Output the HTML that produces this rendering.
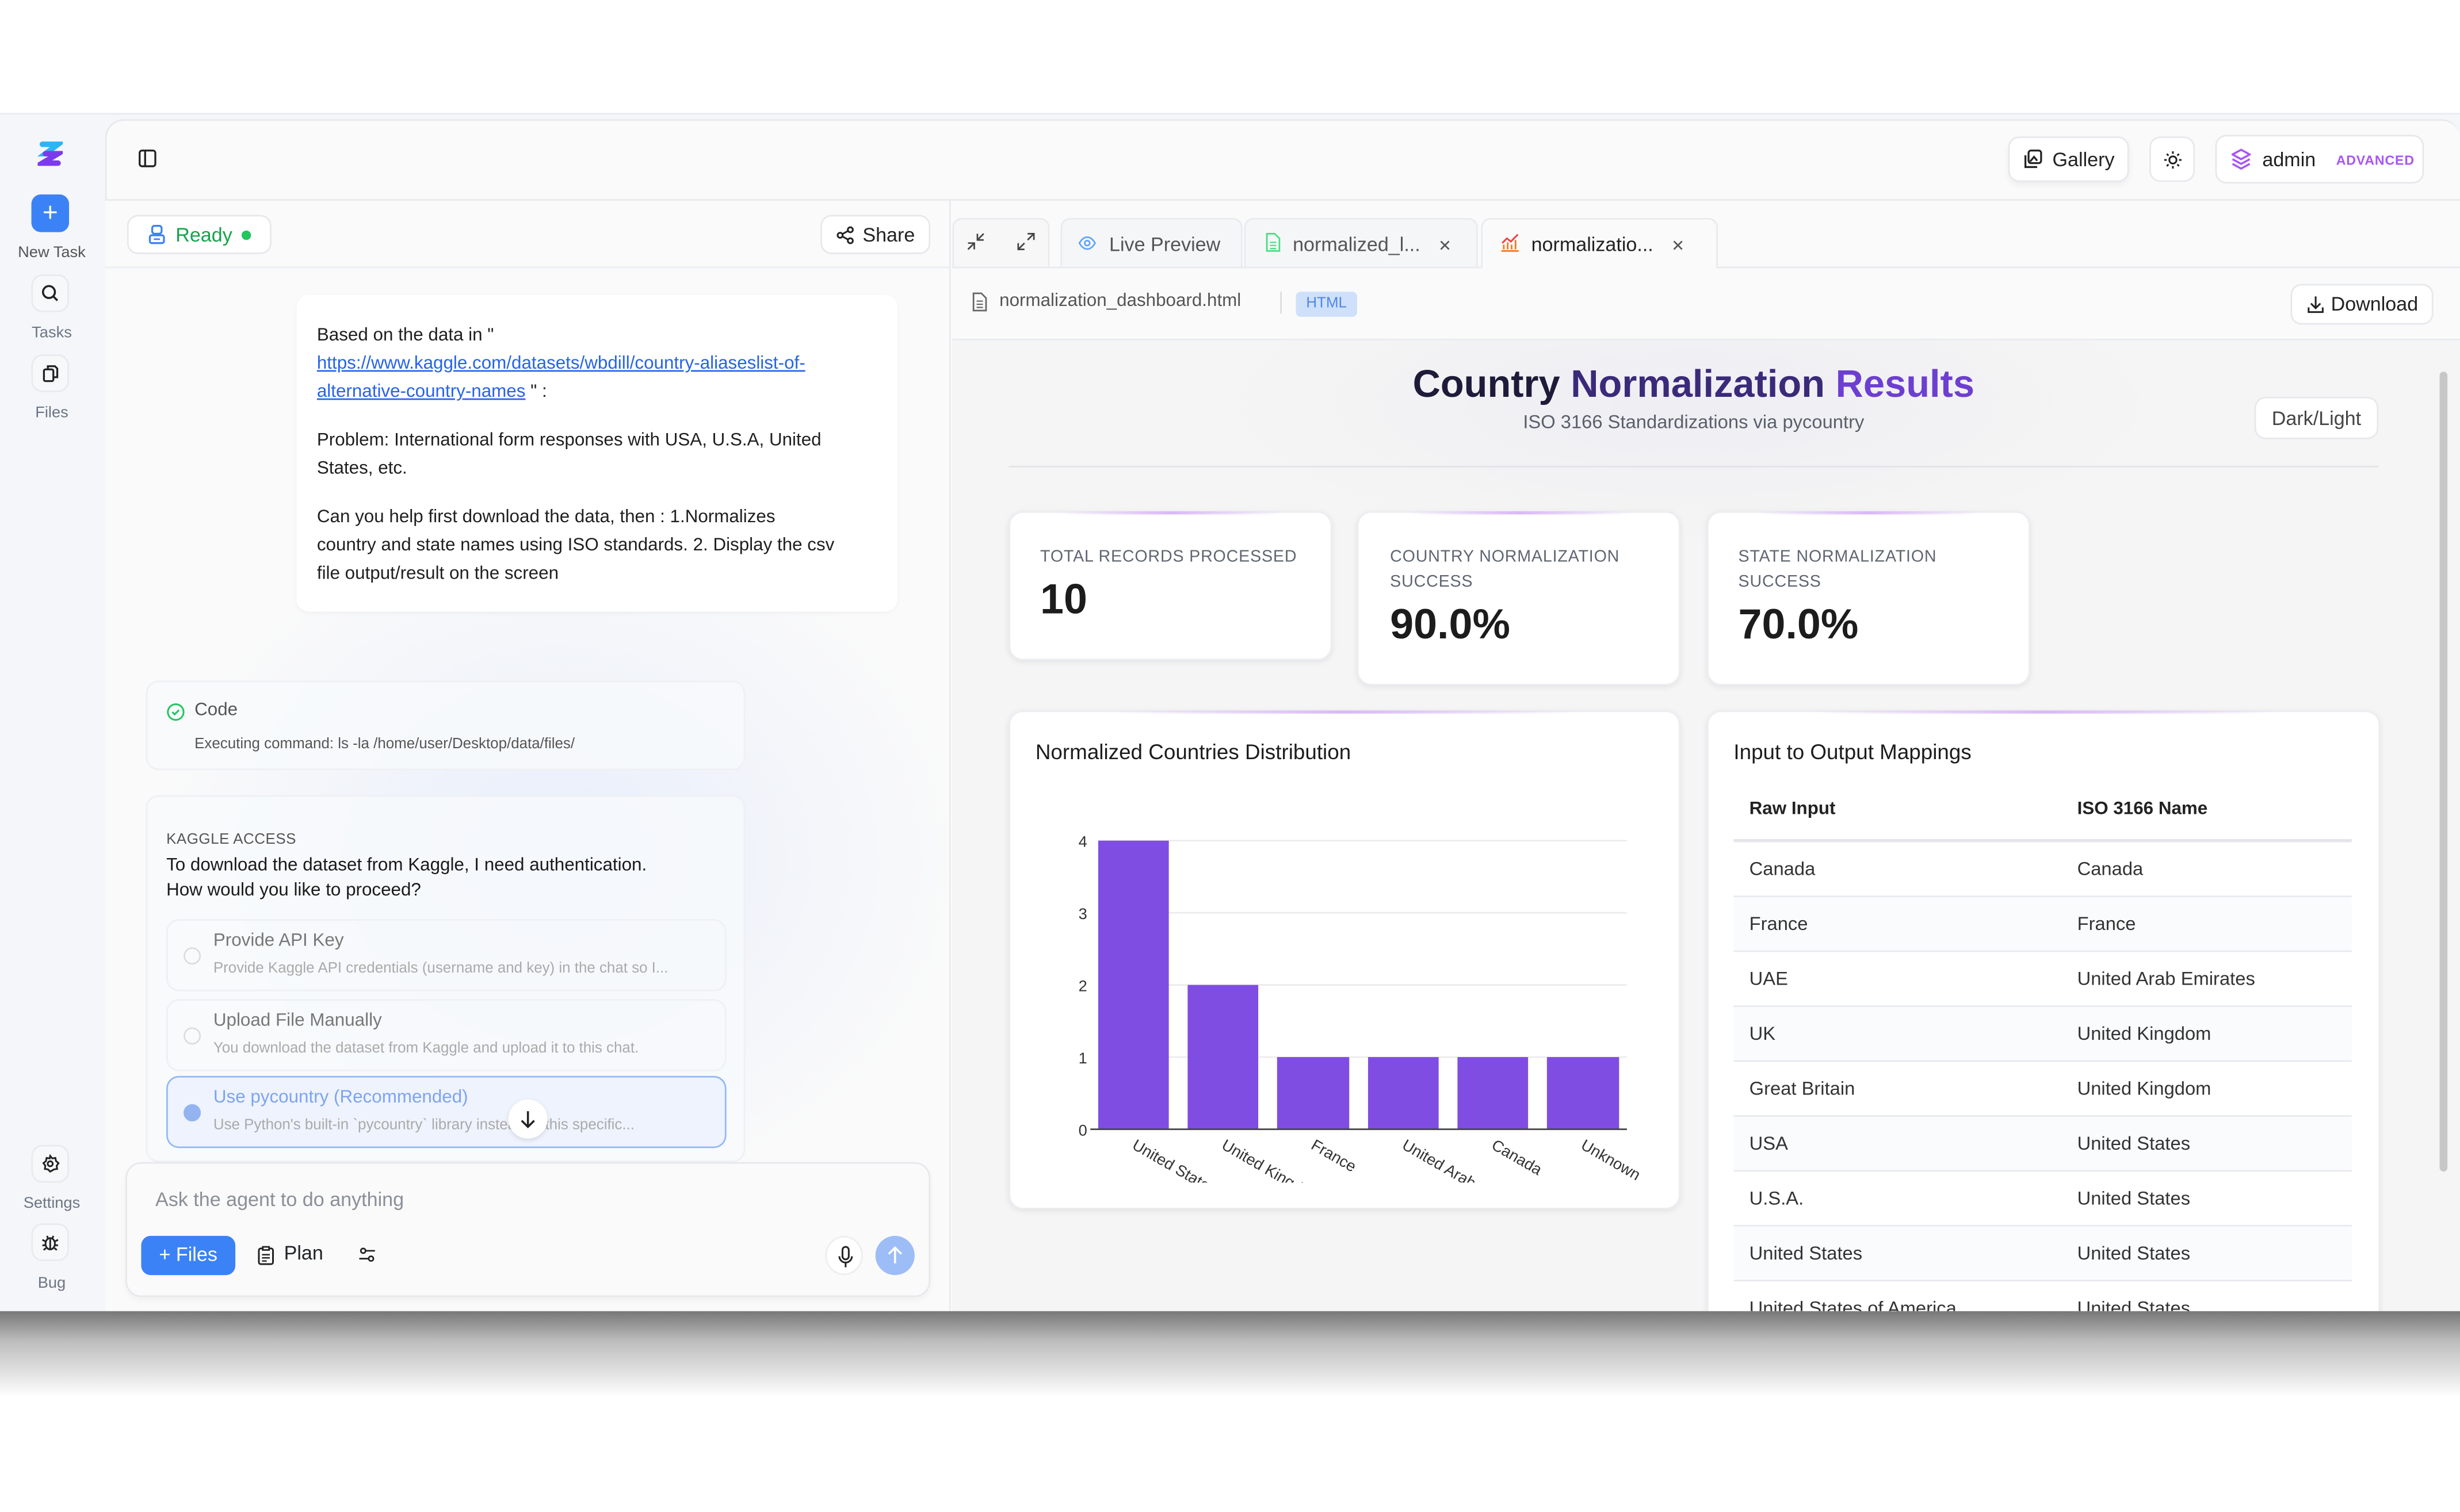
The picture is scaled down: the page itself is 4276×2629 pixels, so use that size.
<!DOCTYPE html>
<html><head><meta charset="utf-8">
<style>
*{box-sizing:border-box;margin:0;padding:0}
html,body{width:4276px;height:2628px;overflow:hidden;background:#fff;font-family:"Liberation Sans",sans-serif;color:#1f2328}
#s{position:absolute;left:0;top:0;width:1568px;height:964px;transform:scale(2.72704);transform-origin:0 0}
.a{position:absolute}
.btn{position:absolute;background:#fff;border:1px solid #e6e8ec;border-radius:7px;display:flex;align-items:center;justify-content:center;font-size:12.5px;color:#222}
.sbl{position:absolute;width:66px;text-align:center;font-size:10px;color:#6b7584}
.sbi{position:absolute;left:20px;width:24px;height:24px;border:1px solid #e8eaee;border-radius:7px;background:#f7f8fa;display:flex;align-items:center;justify-content:center}
.card{position:absolute;background:#fff;border-radius:9px;box-shadow:0 1px 4px rgba(0,0,0,.08);border:1px solid #eceef2}
.card:before{content:"";position:absolute;left:15%;right:15%;top:-1px;height:2px;background:linear-gradient(90deg,transparent,#d9b8f7,transparent)}
.lab{position:absolute;font-size:10.5px;color:#5f6572;letter-spacing:.3px;line-height:16px}
.big{position:absolute;font-size:27px;font-weight:bold;color:#1c1c1c}
.tr{position:absolute;left:1105px;width:394px;height:35px;border-top:1px solid #e8e9ee;font-size:12px;color:#333}
.tr span{position:absolute;top:10px}
.opt{position:absolute;left:106px;width:357px;height:46px;border:1px solid #eef0f4;border-radius:8px}
.opt .t{position:absolute;left:29px;top:7px;font-size:11.5px;color:#777}
.opt .d{position:absolute;left:29px;top:25px;font-size:9.5px;color:#aaa;white-space:nowrap}
.opt .r{position:absolute;left:10px;top:17px;width:11px;height:11px;border:1px solid #ddd;border-radius:50%}
</style></head><body>
<div id="s">
<div class="a" style="left:0;top:72px;width:1568px;height:764px;background:#f4f6f9;border-top:1px solid #e9ebef"></div>
<svg class="a" style="left:24px;top:89px" width="16" height="18" viewBox="0 0 16 18"><path d="M3 3 L13 3 L5 9 L13 9" fill="none" stroke="#29b6f6" stroke-width="3.5" stroke-linecap="round"/><path d="M5 9 L13 9 L3 15 L13 15" fill="none" stroke="#7c3aed" stroke-width="3.5" stroke-linecap="round"/></svg>
<div class="a" style="left:20px;top:124px;width:24px;height:24px;border-radius:6px;background:#3b82f6;color:#fff;font-size:17px;line-height:23px;text-align:center">+</div>
<div class="sbl" style="top:156px;color:#555">New Task</div>
<div class="sbi" style="top:175px"><svg width="12" height="12" viewBox="0 0 12 12"><circle cx="5.2" cy="5.2" r="3.8" fill="none" stroke="#222" stroke-width="1.3"/><path d="M8 8l2.6 2.6" stroke="#222" stroke-width="1.3"/></svg></div>
<div class="sbl" style="top:207px">Tasks</div>
<div class="sbi" style="top:226px"><svg width="12" height="12" viewBox="0 0 12 12"><rect x="2" y="3.5" width="6" height="7.5" rx="1" fill="none" stroke="#222" stroke-width="1.2"/><path d="M4.5 3.5V1.5h4.5l1.5 1.5v5.5H8" fill="none" stroke="#222" stroke-width="1.2"/></svg></div>
<div class="sbl" style="top:258px">Files</div>
<div class="sbi" style="top:730px"><svg width="12" height="12" viewBox="0 0 12 12"><path d="M6 1l1.3 1.6 2-.3.4 2 1.6 1.3-1.2 1.7.3 2-2 .3L6 11 4.6 9.6l-2-.3.3-2L1.7 5.6l1.6-1.3.4-2 2 .3z" fill="none" stroke="#222" stroke-width="1.1"/><circle cx="6" cy="6" r="1.6" fill="none" stroke="#222" stroke-width="1.1"/></svg></div>
<div class="sbl" style="top:762px">Settings</div>
<div class="sbi" style="top:780px"><svg width="12" height="12" viewBox="0 0 12 12"><ellipse cx="6" cy="7" rx="3" ry="3.6" fill="none" stroke="#222" stroke-width="1.1"/><path d="M6 4v6.5M3 5.5L1 4.5M9 5.5l2-1M3 8H1M9 8h2M3.3 9.8L1.8 11M8.7 9.8l1.5 1.2M4.5 3.5L4 2M7.5 3.5L8 2" stroke="#222" stroke-width="1.1"/></svg></div>
<div class="sbl" style="top:813px">Bug</div>

<div class="a" style="left:67px;top:76px;width:1501px;height:760px;background:#fafafa;border:1px solid #e6e8ec;border-right:none;border-bottom:none;border-radius:12px 12px 0 0"></div>
<svg class="a" style="left:88px;top:95px" width="12" height="12" viewBox="0 0 12 12"><rect x="1" y="1" width="10" height="10" rx="1.5" fill="none" stroke="#222" stroke-width="1.2"/><path d="M4.5 1v10" stroke="#222" stroke-width="1.2"/></svg>
<div class="btn" style="left:1280px;top:87px;width:77px;height:29px;box-shadow:0 2px 4px rgba(0,0,0,.05)"><svg width="13" height="13" viewBox="0 0 13 13" style="margin-right:6px"><rect x="4" y="1" width="8" height="8" rx="1.5" fill="none" stroke="#222" stroke-width="1.2"/><path d="M2 4v7.5h7.5M5 8l2.5-3 2 2.5" fill="none" stroke="#222" stroke-width="1.2"/></svg>Gallery</div>
<div class="btn" style="left:1370px;top:87px;width:29px;height:29px"><svg width="12" height="12" viewBox="0 0 12 12"><circle cx="6" cy="6" r="2.3" fill="none" stroke="#222" stroke-width="1.1"/><path d="M6 .5v1.6M6 9.9v1.6M.5 6h1.6M9.9 6h1.6M2.1 2.1l1.1 1.1M8.8 8.8l1.1 1.1M2.1 9.9l1.1-1.1M8.8 3.2l1.1-1.1" stroke="#222" stroke-width="1.1"/></svg></div>
<div class="btn" style="left:1412px;top:86px;width:133px;height:31px;justify-content:flex-start;padding-left:8px"><svg width="15" height="15" viewBox="0 0 15 15"><path d="M7.5 1.5L13 4.5 7.5 7.5 2 4.5z M2 7.5l5.5 3 5.5-3 M2 10.5l5.5 3 5.5-3" fill="none" stroke="#a855f7" stroke-width="1.3" stroke-linejoin="round"/></svg><span style="margin-left:6px;font-size:12.5px">admin</span><span style="margin-left:13px;font-size:8.5px;font-weight:bold;color:#a855f7;letter-spacing:.3px">ADVANCED</span></div>
<div class="a" style="left:67px;top:127px;width:1501px;height:1px;background:#e8eaee"></div>

<div class="a" style="left:67px;top:128px;width:539px;height:708px;background:radial-gradient(ellipse 260px 220px at 290px 420px,#e8eefb,rgba(250,250,250,0)),#fafafa;border-right:1px solid #e8eaee"></div>
<div class="a" style="left:67px;top:170px;width:539px;height:1px;background:#eceef1"></div>
<div class="btn" style="left:81px;top:137px;width:92px;height:25px;color:#16a34a;font-size:12.5px"><svg width="12" height="13" viewBox="0 0 12 13" style="margin-right:6px"><rect x="3" y="1" width="6" height="5" rx="1.5" fill="none" stroke="#3b82f6" stroke-width="1.2"/><rect x="1.5" y="7" width="9" height="5" rx="1.2" fill="none" stroke="#3b82f6" stroke-width="1.2"/><path d="M4 9.5h4" stroke="#3b82f6" stroke-width="1"/></svg>Ready<span style="display:inline-block;width:6px;height:6px;border-radius:50%;background:#22c55e;margin-left:6px"></span></div>
<div class="btn" style="left:523px;top:137px;width:70px;height:25px"><svg width="12" height="12" viewBox="0 0 12 12" style="margin-right:5px"><circle cx="9" cy="2.5" r="1.6" fill="none" stroke="#222" stroke-width="1.1"/><circle cx="2.5" cy="6" r="1.6" fill="none" stroke="#222" stroke-width="1.1"/><circle cx="9" cy="9.5" r="1.6" fill="none" stroke="#222" stroke-width="1.1"/><path d="M4 5.2l3.6-2M4 6.8l3.6 2" stroke="#222" stroke-width="1.1"/></svg>Share</div>

<div class="a" style="left:189px;top:188px;width:383px;height:202px;background:#fff;border-radius:8px;box-shadow:0 1px 3px rgba(0,0,0,.04);padding:17px 13px;font-size:11.5px;line-height:18px;color:#1f1f1f;white-space:nowrap">
Based on the data in "<br><span style="color:#2563eb;text-decoration:underline">https://www.kaggle.com/datasets/wbdill/country-aliaseslist-of-</span><br><span style="color:#2563eb;text-decoration:underline">alternative-country-names</span> " :
<div style="height:13px"></div>Problem: International form responses with USA, U.S.A, United<br>States, etc.
<div style="height:13px"></div>Can you help first download the data, then : 1.Normalizes<br>country and state names using ISO standards. 2. Display the csv<br>file output/result on the screen</div>

<div class="a" style="left:93px;top:434px;width:382px;height:57px;background:rgba(248,250,253,.8);border:1px solid #eef0f4;border-radius:8px"></div>
<svg class="a" style="left:106px;top:448px" width="12" height="12" viewBox="0 0 12 12"><circle cx="6" cy="6" r="5" fill="none" stroke="#22c55e" stroke-width="1.1"/><path d="M3.8 6l1.5 1.5 2.8-2.8" fill="none" stroke="#22c55e" stroke-width="1.1"/></svg>
<div class="a" style="left:124px;top:447px;font-size:11.5px;color:#555">Code</div>
<div class="a" style="left:124px;top:469px;font-size:9.5px;color:#555">Executing command: ls -la /home/user/Desktop/data/files/</div>

<div class="a" style="left:93px;top:507px;width:382px;height:234px;background:rgba(248,250,253,.8);border:1px solid #eef0f4;border-radius:8px"></div>
<div class="a" style="left:106px;top:530px;font-size:9.5px;color:#555;letter-spacing:.2px">KAGGLE ACCESS</div>
<div class="a" style="left:106px;top:544px;font-size:11.5px;line-height:16px;color:#1a1a1a">To download the dataset from Kaggle, I need authentication.<br>How would you like to proceed?</div>
<div class="opt" style="top:586px"><div class="r"></div><div class="t">Provide API Key</div><div class="d">Provide Kaggle API credentials (username and key) in the chat so I...</div></div>
<div class="opt" style="top:637px"><div class="r"></div><div class="t">Upload File Manually</div><div class="d">You download the dataset from Kaggle and upload it to this chat.</div></div>
<div class="opt" style="top:686px;border-color:#93b8f5;background:#eef3fd"><div class="r" style="background:#93b4f0;border-color:#93b4f0"></div><div class="t" style="color:#7ea4ef">Use pycountry (Recommended)</div><div class="d">Use Python's built-in `pycountry` library instead of this specific...</div></div>
<div class="a" style="left:324px;top:701px;width:25px;height:25px;border-radius:50%;background:#fff;box-shadow:0 1px 3px rgba(0,0,0,.12)"><svg width="25" height="25" viewBox="0 0 25 25"><path d="M12.5 7.5v10M8.5 13.5l4 4 4-4" fill="none" stroke="#222" stroke-width="1.3"/></svg></div>

<div class="a" style="left:80px;top:741px;width:513px;height:86px;background:#fafafa;border:1px solid #e6e8ec;border-radius:10px;box-shadow:0 2px 4px rgba(0,0,0,.04)"></div>
<div class="a" style="left:99px;top:758px;font-size:12.5px;color:#8a8f98">Ask the agent to do anything</div>
<div class="a" style="left:90px;top:788px;width:60px;height:25px;background:#3b82f6;border-radius:6px;color:#fff;font-size:12.5px;line-height:25px;text-align:center">+ Files</div>
<svg class="a" style="left:164px;top:794px" width="11" height="13" viewBox="0 0 11 13"><rect x="1" y="2" width="9" height="10" rx="1.2" fill="none" stroke="#222" stroke-width="1.1"/><rect x="3.5" y="1" width="4" height="2" fill="#fff" stroke="#222" stroke-width="1"/><path d="M3 6h5M3 8h5M3 10h3" stroke="#222" stroke-width=".9"/></svg>
<div class="a" style="left:181px;top:792px;font-size:12.5px">Plan</div>
<svg class="a" style="left:228px;top:794px" width="12" height="12" viewBox="0 0 12 12"><circle cx="3.5" cy="3.5" r="1.5" fill="none" stroke="#222" stroke-width="1"/><circle cx="8.5" cy="8.5" r="1.5" fill="none" stroke="#222" stroke-width="1"/><path d="M5 3.5h6M1 8.5h6" stroke="#222" stroke-width="1"/></svg>
<div class="a" style="left:526px;top:788px;width:24px;height:25px;border-radius:50%;border:1px solid #eee;background:#fff"><svg width="24" height="25" viewBox="0 0 24 25"><rect x="10" y="6" width="4" height="8" rx="2" fill="none" stroke="#222" stroke-width="1.1"/><path d="M8 12a4 4 0 008 0M12 16v3" fill="none" stroke="#222" stroke-width="1.1"/></svg></div>
<div class="a" style="left:558px;top:788px;width:25px;height:25px;border-radius:50%;background:#9dbdf7"><svg width="25" height="25" viewBox="0 0 25 25"><path d="M12.5 17.5v-10M8.5 11.5l4-4 4 4" fill="none" stroke="#fff" stroke-width="1.3"/></svg></div>

<div class="a" style="left:607px;top:170px;width:961px;height:1px;background:#e8eaee"></div>
<div class="a" style="left:607px;top:139px;width:62px;height:31px;border:1px solid #e8eaee;border-bottom:none;border-radius:6px 6px 0 0;background:#f7f7f8"></div>
<svg class="a" style="left:616px;top:148px" width="12" height="12" viewBox="0 0 12 12"><path d="M7 1v4h4M7 5l4-4M5 11V7H1M5 7l-4 4" fill="none" stroke="#444" stroke-width="1"/></svg>
<svg class="a" style="left:648px;top:148px" width="12" height="12" viewBox="0 0 12 12"><path d="M7 1h4v4M11 1L7 5M5 11H1V7M1 11l4-4" fill="none" stroke="#444" stroke-width="1"/></svg>
<div class="a" style="left:676px;top:139px;width:116px;height:31px;border:1px solid #e8eaee;border-bottom:none;border-radius:6px 6px 0 0;background:#f5f6f8;font-size:12.5px;color:#555;padding:9px 0 0 30px">Live Preview</div>
<svg class="a" style="left:687px;top:149px" width="12" height="12" viewBox="0 0 12 12"><path d="M1 6c1.5-2.6 3.2-3.8 5-3.8S9.5 3.4 11 6c-1.5 2.6-3.2 3.8-5 3.8S2.5 8.6 1 6z" fill="none" stroke="#60a5fa" stroke-width="1"/><circle cx="6" cy="6" r="1.6" fill="none" stroke="#60a5fa" stroke-width="1"/></svg>
<div class="a" style="left:793px;top:139px;width:149px;height:31px;border:1px solid #e8eaee;border-bottom:none;border-radius:6px 6px 0 0;background:#f5f6f8;font-size:12.5px;color:#555;padding:9px 0 0 30px">normalized_l... <span style="margin-left:8px;font-size:10px">✕</span></div>
<svg class="a" style="left:806px;top:148px" width="11" height="13" viewBox="0 0 11 13"><path d="M1.5 1h5l3 3v8h-8z" fill="none" stroke="#4ade80" stroke-width="1"/><path d="M3.5 6.5h4M3.5 8.5h4M3.5 10.5h4" stroke="#4ade80" stroke-width=".8"/></svg>
<div class="a" style="left:944px;top:139px;width:151px;height:32px;border:1px solid #e8eaee;border-bottom:none;border-radius:6px 6px 0 0;background:#fafafa;font-size:12.5px;color:#222;padding:9px 0 0 31px">normalizatio... <span style="margin-left:8px;font-size:10px;color:#555">✕</span></div>
<svg class="a" style="left:956px;top:148px" width="13" height="13" viewBox="0 0 13 13"><path d="M1 12h11M2.5 11V8M5 11V6.5M7.5 11V8M10 11V5" stroke="#f97316" stroke-width="1"/><path d="M1.5 7l3-3 2.5 2 4.5-4.5" fill="none" stroke="#ef4444" stroke-width="1.1"/></svg>

<svg class="a" style="left:619px;top:186px" width="11" height="13" viewBox="0 0 11 13"><path d="M1.5 1h5l3 3v8h-8z" fill="none" stroke="#666" stroke-width="1"/><path d="M3.5 6h4M3.5 8h4M3.5 10h4" stroke="#666" stroke-width=".8"/></svg>
<div class="a" style="left:637px;top:186px;font-size:11.5px;color:#555">normalization_dashboard.html</div>
<div class="a" style="left:816px;top:186px;width:1px;height:14px;background:#ddd"></div>
<div class="a" style="left:826px;top:186px;width:39px;height:16px;background:#cfe0fb;border-radius:3px;font-size:9.5px;color:#4f86e8;text-align:center;line-height:16px">HTML</div>
<div class="btn" style="left:1460px;top:181px;width:91px;height:26px"><svg width="12" height="12" viewBox="0 0 12 12" style="margin-right:4px"><path d="M6 1v7M3 5.5L6 8.5 9 5.5M1.5 8v3h9V8" fill="none" stroke="#222" stroke-width="1.1"/></svg>Download</div>
<div class="a" style="left:607px;top:216px;width:961px;height:1px;background:#e8eaee"></div>

<div class="a" style="left:607px;top:217px;width:961px;height:619px;background:radial-gradient(ellipse 300px 90px at 470px 40px,#eeeef3,rgba(245,245,245,0)),#f5f5f5"></div>
<div class="a" style="left:1555px;top:237px;width:5px;height:510px;background:#c7c7c7;border-radius:3px"></div>

<div class="a" style="left:643px;top:232px;width:873px;text-align:center;font-size:24.5px;font-weight:bold;color:#1e1b3a">Country <span style="color:#3b2a7a">Normalization</span> <span style="color:#6d3fd0">Results</span></div>
<div class="a" style="left:643px;top:262px;width:873px;text-align:center;font-size:12px;color:#5a5f6b">ISO 3166 Standardizations via pycountry</div>
<div class="btn" style="left:1437px;top:253px;width:79px;height:27px;color:#444;font-size:12.5px">Dark/Light</div>
<div class="a" style="left:643px;top:297px;width:873px;height:1px;background:#e2e3e6"></div>

<div class="card" style="left:643px;top:326px;width:206px;height:95px"></div>
<div class="lab" style="left:663px;top:347px">TOTAL RECORDS PROCESSED</div>
<div class="big" style="left:663px;top:367px">10</div>
<div class="card" style="left:865px;top:326px;width:206px;height:111px"></div>
<div class="lab" style="left:886px;top:347px">COUNTRY NORMALIZATION<br>SUCCESS</div>
<div class="big" style="left:886px;top:383px">90.0%</div>
<div class="card" style="left:1088px;top:326px;width:206px;height:111px"></div>
<div class="lab" style="left:1108px;top:347px">STATE NORMALIZATION<br>SUCCESS</div>
<div class="big" style="left:1108px;top:383px">70.0%</div>

<div class="card" style="left:643px;top:453px;width:428px;height:318px"></div>
<div class="a" style="left:660px;top:472px;font-size:13.5px;color:#1c1c1c">Normalized Countries Distribution</div>
<svg class="a" style="left:643px;top:453px" width="428" height="318" viewBox="643 453 428 318">
<g stroke="#ececef" stroke-width="1"><line x1="700" y1="536" x2="1037" y2="536"/><line x1="700" y1="582" x2="1037" y2="582"/><line x1="700" y1="628" x2="1037" y2="628"/><line x1="700" y1="674" x2="1037" y2="674"/></g>
<g fill="#7f4de2"><rect x="700" y="536" width="45" height="184"/><rect x="757" y="628" width="45" height="92"/><rect x="814" y="674" width="46" height="46"/><rect x="872" y="674" width="45" height="46"/><rect x="929" y="674" width="45" height="46"/><rect x="986" y="674" width="46" height="46"/></g>
<line x1="695" y1="720" x2="1037" y2="720" stroke="#444" stroke-width="1"/>
<g font-family="Liberation Sans" font-size="10" fill="#333" text-anchor="end"><text x="693" y="540">4</text><text x="693" y="586">3</text><text x="693" y="632">2</text><text x="693" y="678">1</text><text x="693" y="724">0</text></g>
<defs><clipPath id="c"><rect x="643" y="720" width="428" height="34"/></clipPath></defs>
<g font-family="Liberation Sans" font-size="10" fill="#333" clip-path="url(#c)">
<text transform="translate(721,732) rotate(30)">United States</text>
<text transform="translate(778,732) rotate(30)">United Kingdom</text>
<text transform="translate(835,732) rotate(30)">France</text>
<text transform="translate(893,732) rotate(30)">United Arab Emirates</text>
<text transform="translate(950,732) rotate(30)">Canada</text>
<text transform="translate(1007,732) rotate(30)">Unknown</text></g>
</svg>

<div class="card" style="left:1088px;top:453px;width:429px;height:400px"></div>
<div class="a" style="left:1105px;top:472px;font-size:13.5px;color:#1c1c1c">Input to Output Mappings</div>
<div class="a" style="left:1115px;top:510px;font-size:11.5px;font-weight:bold;color:#222">Raw Input</div>
<div class="a" style="left:1324px;top:510px;font-size:11.5px;font-weight:bold;color:#222">ISO 3166 Name</div>
<div class="a" style="left:1105px;top:535px;width:394px;height:2px;background:#e4e4ea"></div>
<div class="tr" style="top:537px;border-top:none"><span style="left:10px">Canada</span><span style="left:219px">Canada</span></div>
<div class="tr" style="top:571px;background:#fafbfd"><span style="left:10px">France</span><span style="left:219px">France</span></div>
<div class="tr" style="top:606px"><span style="left:10px">UAE</span><span style="left:219px">United Arab Emirates</span></div>
<div class="tr" style="top:641px;background:#fafbfd"><span style="left:10px">UK</span><span style="left:219px">United Kingdom</span></div>
<div class="tr" style="top:676px"><span style="left:10px">Great Britain</span><span style="left:219px">United Kingdom</span></div>
<div class="tr" style="top:711px;background:#fafbfd"><span style="left:10px">USA</span><span style="left:219px">United States</span></div>
<div class="tr" style="top:746px"><span style="left:10px">U.S.A.</span><span style="left:219px">United States</span></div>
<div class="tr" style="top:781px;background:#fafbfd"><span style="left:10px">United States</span><span style="left:219px">United States</span></div>
<div class="tr" style="top:816px;height:20px;overflow:hidden"><span style="left:10px">United States of America</span><span style="left:219px">United States</span></div>
<div class="a" style="left:0;top:836px;width:1568px;height:55px;background:linear-gradient(#777,#bdbdbd 35%,#fff)"></div>
<div class="a" style="left:0;top:891px;width:1568px;height:73px;background:#fff"></div>
</div>
</body></html>
